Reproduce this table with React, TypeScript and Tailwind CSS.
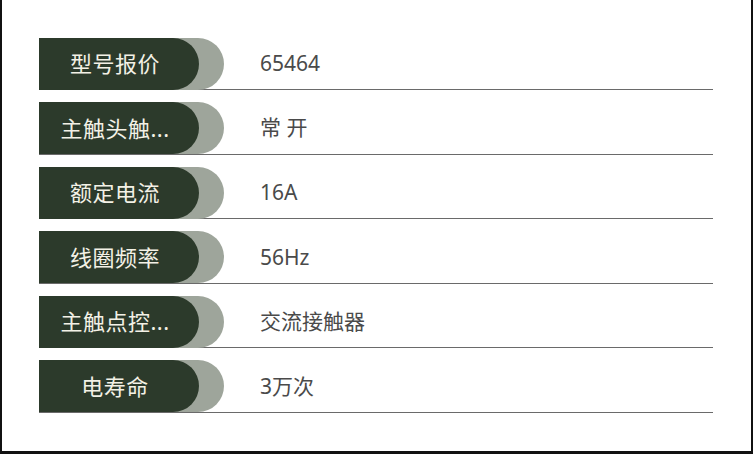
const specs = [
  { label: '型号报价', value: '65464' },
  { label: '主触头触...', value: '常 开' },
  { label: '额定电流', value: '16A' },
  { label: '线圈频率', value: '56Hz' },
  { label: '主触点控...', value: '交流接触器' },
  { label: '电寿命', value: '3万次' },
];

export default function App() {
  return (
    <div
      className="w-[753px] h-[454px] bg-white border-l-2 border-r-2 border-b-[3px] border-[#111] pt-[38px] pl-[37px]"
      style={{ fontFamily: '"Noto Sans", "Noto Sans CJK SC", sans-serif' }}
    >
      <div className="w-[674px] flex flex-col gap-[12.6px]">
        {specs.map((row) => (
          <div key={row.label} className="relative h-[52px] flex items-center border-b-[1.5px] border-[#6a6a6a]">
            {/* pill with offset shadow */}
            <div className="relative h-[52px] w-[185px] shrink-0">
              <div className="absolute inset-0 rounded-r-full bg-[#9ea59b]" />
              <div className="absolute left-0 top-0 h-[52px] w-[160px] rounded-r-full bg-[#2c3a2b] flex items-center justify-center pr-2">
                <span className="text-[22px] text-[#f3f1e6] tracking-[0.5px]">{row.label}</span>
              </div>
            </div>
            <span className="ml-[36px] text-[21px] text-[#4a4a4a]">{row.value}</span>
          </div>
        ))}
      </div>
    </div>
  );
}
